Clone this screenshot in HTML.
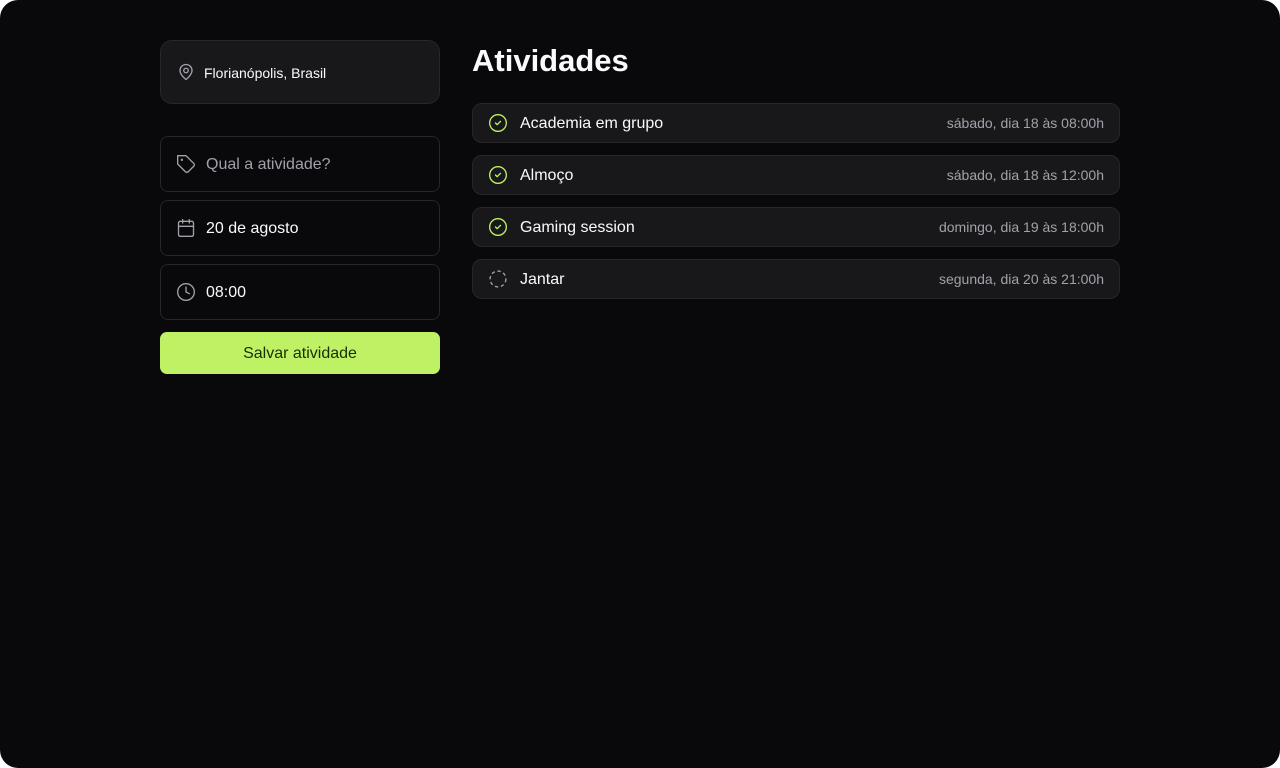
<!DOCTYPE html>
<html><head><meta charset="utf-8"><style>
html,body{margin:0;padding:0;background:#fff;width:1280px;height:768px;overflow:hidden}
*{box-sizing:border-box}
.app{position:absolute;left:0;top:0;width:1280px;height:768px;background:#09090b;border-radius:18px;font-family:"Liberation Sans",sans-serif;color:#fafafa}
.t{position:relative;top:1px}
.loc{position:absolute;left:160px;top:40px;width:280px;height:64px;background:#18181b;border:1px solid #27272a;border-radius:12px;display:flex;align-items:center;padding-left:16px;font-size:14px;gap:9px}
.inp{position:absolute;left:160px;width:280px;height:56px;border:1px solid #27272a;border-radius:8px;display:flex;align-items:center;padding-left:15px;gap:10px;font-size:16px}
.btn{position:absolute;left:160px;top:332px;width:280px;height:42px;background:#bef264;border-radius:7px;color:#1a2e05;font-size:16px;display:flex;align-items:center;justify-content:center}
h1{position:absolute;left:472px;top:41px;margin:0;font-size:31px;font-weight:bold;line-height:40px}
.row{position:absolute;left:472px;width:648px;height:40px;background:#18181b;border:1px solid #27272a;border-radius:10px;display:flex;align-items:center;padding:0 15px 0 15px;gap:12px;font-size:16px}
.row .d{margin-left:auto;font-size:14px;color:#a1a1aa}
svg{flex:none}
</style></head><body><div class="app">
<div class="loc"><svg width="18" height="18" viewBox="0 0 24 24" fill="none" stroke="#a1a1aa" stroke-width="1.8" stroke-linecap="round" stroke-linejoin="round"><path d="M20 10c0 6-8 12-8 12s-8-6-8-12a8 8 0 0 1 16 0Z"/><circle cx="12" cy="10" r="3"/></svg><span class="t">Florianópolis, Brasil</span></div>
<div class="inp" style="top:136px;color:#a1a1aa"><svg width="20" height="20" viewBox="0 0 24 24" fill="none" stroke="#a1a1aa" stroke-width="1.6" stroke-linecap="round" stroke-linejoin="round"><path d="M12 2H2v10l9.3 9.3a2.4 2.4 0 0 0 3.4 0l6.6-6.6a2.4 2.4 0 0 0 0-3.4Z"/><circle cx="7" cy="7" r=".6"/></svg><span class="t">Qual a atividade?</span></div>
<div class="inp" style="top:200px"><svg width="20" height="20" viewBox="0 0 24 24" fill="none" stroke="#a1a1aa" stroke-width="1.6" stroke-linecap="round"><rect x="3" y="4" width="18" height="18" rx="2"/><path d="M16 2v4M8 2v4M3 10h18"/></svg><span class="t">20 de agosto</span></div>
<div class="inp" style="top:264px"><svg width="20" height="20" viewBox="0 0 24 24" fill="none" stroke="#a1a1aa" stroke-width="1.6" stroke-linecap="round"><circle cx="12" cy="12" r="10"/><path d="M12 6v6l4 2"/></svg><span class="t">08:00</span></div>
<div class="btn"><span class="t">Salvar atividade</span></div>
<h1>Atividades</h1>
<div class="row" style="top:103px"><svg width="20" height="20" viewBox="0 0 24 24" fill="none" stroke="#bef264" stroke-width="1.6" stroke-linecap="round" stroke-linejoin="round"><circle cx="12" cy="12" r="10"/><path d="m9 12 2 2 4-4"/></svg><span class="t">Academia em grupo</span><span class="d">sábado, dia 18 às 08:00h</span></div>
<div class="row" style="top:155px"><svg width="20" height="20" viewBox="0 0 24 24" fill="none" stroke="#bef264" stroke-width="1.6" stroke-linecap="round" stroke-linejoin="round"><circle cx="12" cy="12" r="10"/><path d="m9 12 2 2 4-4"/></svg><span class="t">Almoço</span><span class="d">sábado, dia 18 às 12:00h</span></div>
<div class="row" style="top:207px"><svg width="20" height="20" viewBox="0 0 24 24" fill="none" stroke="#bef264" stroke-width="1.6" stroke-linecap="round" stroke-linejoin="round"><circle cx="12" cy="12" r="10"/><path d="m9 12 2 2 4-4"/></svg><span class="t">Gaming session</span><span class="d">domingo, dia 19 às 18:00h</span></div>
<div class="row" style="top:259px"><svg width="20" height="20" viewBox="0 0 24 24" fill="none" stroke="#a1a1aa" stroke-width="1.6" stroke-dasharray="4 3.3"><circle cx="12" cy="12" r="9.5"/></svg><span class="t">Jantar</span><span class="d">segunda, dia 20 às 21:00h</span></div>
</div></body></html>
